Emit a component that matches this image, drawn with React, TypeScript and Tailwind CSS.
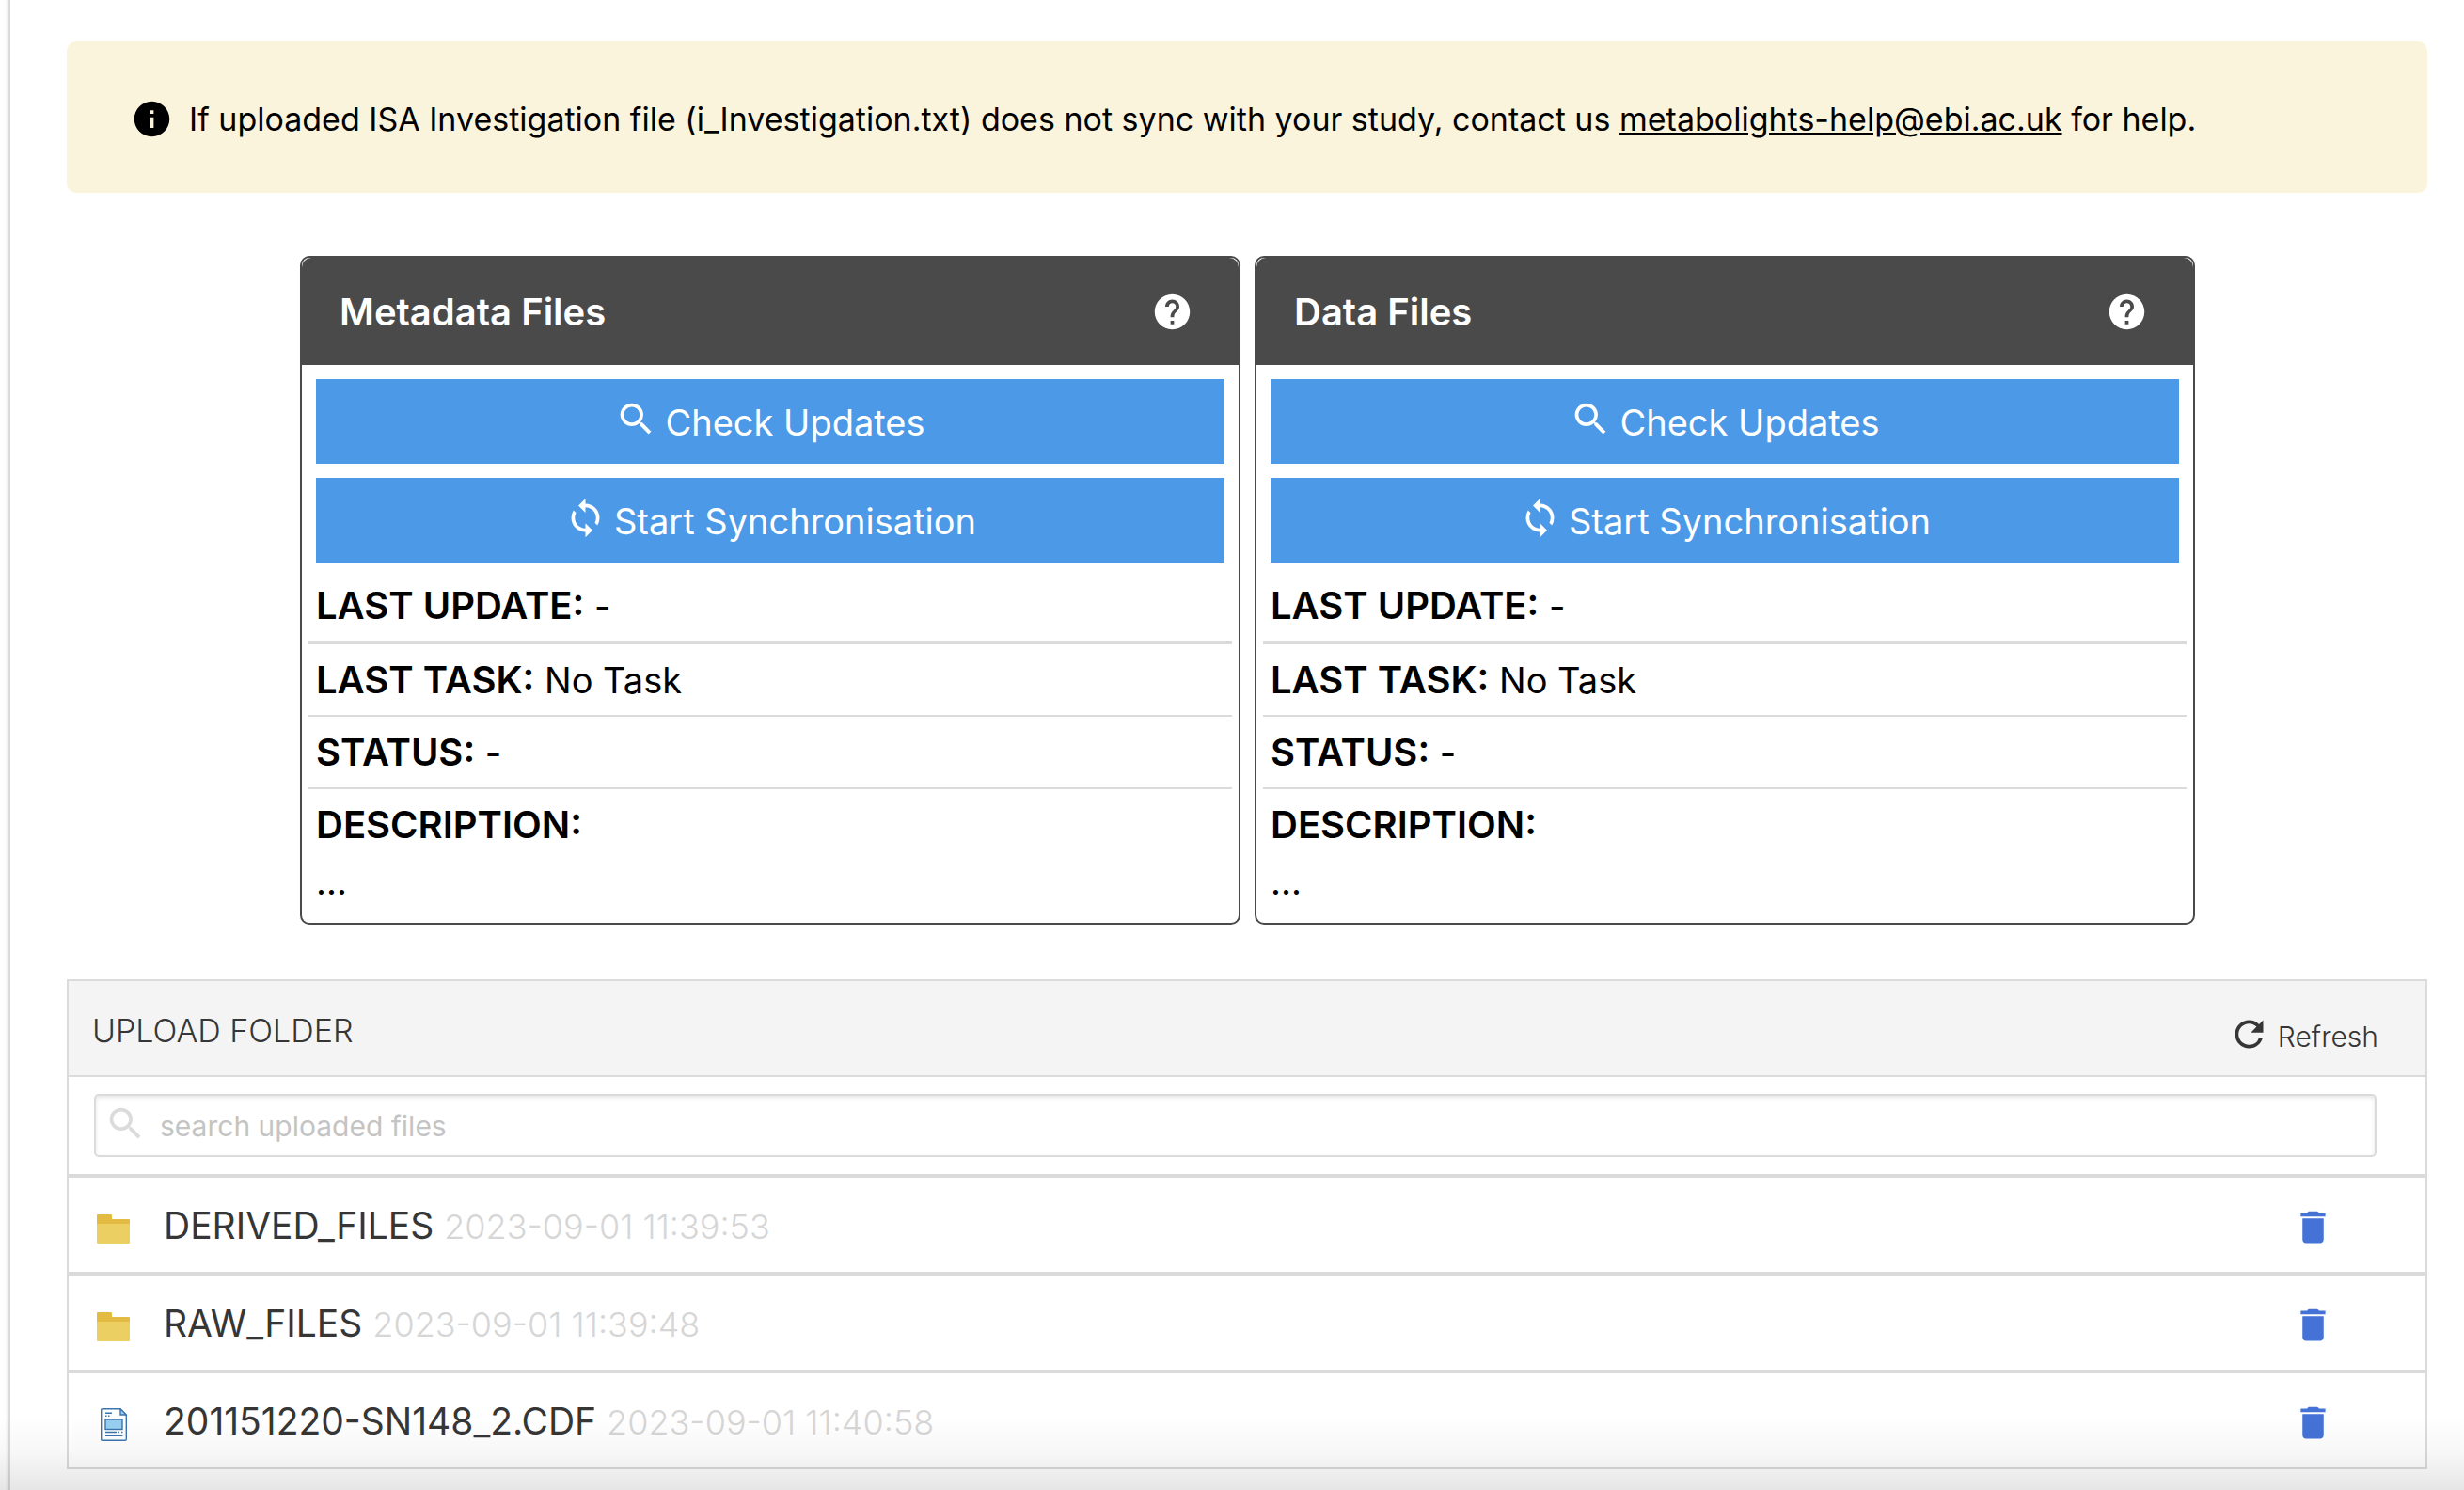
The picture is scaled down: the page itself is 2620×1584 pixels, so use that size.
import { MdDelete, MdHelp, MdInfo, MdRefresh, MdSearch, MdSync } from "react-icons/md";

function FolderIcon() {
  return (
    <svg className="h-[31px] w-[35px]" viewBox="0 0 35 31" aria-hidden="true">
      <path d="M1 0h14q1 0 1 1v4h18q1 0 1 1v10H0V1q0-1 1-1z" fill="#e3ba42" />
      <path d="M0 10h35v20q0 1-1 1H1q-1 0-1-1z" fill="#ebcf63" />
    </svg>
  );
}

function DocumentIcon() {
  return (
    <svg className="h-[35px] w-[28px]" viewBox="0 0 28 35" aria-hidden="true">
      <path d="M2 .7h18.5l6.8 6.8V33q0 1.3-1.3 1.3H2Q.7 34.3.7 33V2Q.7.7 2 .7z" fill="#fff" stroke="#3b74ae" strokeWidth="1.4" />
      <path d="M21 .7v6.3h6.3z" fill="#98cff0" stroke="#3b74ae" strokeWidth="1.4" />
      <path d="M5 5.2h7M5 8.2h1.5M8 8.2h1.5M5 25.5h12M19 25.5h1M22 25.5h1.5M5 29.3h18.5" stroke="#3b74ae" strokeWidth="1.5" />
      <rect x="5" y="12" width="18" height="10.5" fill="#98cff0" stroke="#3b74ae" strokeWidth="1.4" />
    </svg>
  );
}

function SyncCard({ title }: { title: string }) {
  return (
    <section className="flex-1 rounded-[10px] border-2 border-[#4a4a4a] bg-white">
      <header className="flex h-[114px] items-center justify-between rounded-t-[10px] bg-[#4a4a4a] pr-12 pl-10 text-white">
        <h2 className="pt-0.5 text-[40px] font-semibold">{title}</h2>
        <button aria-label={"Help: " + title}>
          <MdHelp size={45} />
        </button>
      </header>
      <div className="flex flex-col gap-[15px] px-[15px] pt-[15px]">
        <button className="flex h-[90px] items-center justify-center gap-2 bg-[#4b99e7] pt-0.5 text-[38px] text-white">
          <MdSearch className="mb-2" size={45} />
          Check Updates
        </button>
        <button className="flex h-[90px] items-center justify-center gap-2 bg-[#4b99e7] pt-0.5 text-[38px] text-white">
          <MdSync className="mb-2" size={45} />
          Start Synchronisation
        </button>
      </div>
      <div className="px-[7px] pb-[14px] text-[38px] leading-[60px] text-black">
        <p className="border-b-4 border-[#dbdbdb] px-2 pt-4 pb-[7px]">
          <b className="text-[40px] font-semibold">LAST UPDATE:</b> -
        </p>
        <p className="border-b-2 border-[#dbdbdb] px-2 pt-2 pb-[7px]">
          <b className="text-[40px] font-semibold">LAST TASK:</b> No Task
        </p>
        <p className="border-b-2 border-[#dbdbdb] px-2 pt-2 pb-[7px]">
          <b className="text-[40px] font-semibold">STATUS:</b> -
        </p>
        <div className="px-2 pt-2">
          <p>
            <b className="text-[40px] font-semibold">DESCRIPTION:</b>
          </p>
          <p>...</p>
        </div>
      </div>
    </section>
  );
}

const files = [
  { name: "DERIVED_FILES", date: "2023-09-01 11:39:53", folder: true },
  { name: "RAW_FILES", date: "2023-09-01 11:39:48", folder: true },
  { name: "201151220-SN148_2.CDF", date: "2023-09-01 11:40:58", folder: false },
];

export default function App() {
  return (
    <div className="relative flex min-h-screen bg-white font-[Inter,sans-serif]">
      <div className="w-[11px] shrink-0 border-r-2 border-[#dbdbdb] bg-linear-to-r from-white from-60% to-[#ececec]" />
      <main className="flex-1 pt-11 pr-[39px] pl-[60px]">
        <div className="flex h-[161px] items-center gap-[17px] rounded-[10px] bg-[#fbf4dc] px-[68px] pt-1 text-[34px] text-black">
          <MdInfo className="shrink-0" size={45} />
          <p>
            If uploaded ISA Investigation file (i_Investigation.txt) does not sync with your study, contact us{" "}
            <a className="underline" href="mailto:metabolights-help@ebi.ac.uk">
              metabolights-help@ebi.ac.uk
            </a>{" "}
            for help.
          </p>
        </div>

        <div className="mt-[67px] flex gap-[15px] pr-[247px] pl-[248px]">
          <SyncCard title="Metadata Files" />
          <SyncCard title="Data Files" />
        </div>

        <section className="mt-[58px] border-2 border-[#dbdbdb] text-[#363636]">
          <header className="flex h-[102px] items-center justify-between border-b-2 border-[#dbdbdb] bg-[#f4f4f4] pr-[50px] pl-[25px] font-light">
            <h2 className="pt-1 text-[34px]">UPLOAD FOLDER</h2>
            <button className="flex items-center gap-2 pt-[18px] text-[30px]">
              <MdRefresh className="mb-1.5" size={45} />
              Refresh
            </button>
          </header>
          <div className="flex items-center py-[18px] pr-[52px] pl-[27px]">
            <label className="flex h-[67px] flex-1 items-center gap-3.5 rounded-[5px] border-2 border-[#dbdbdb] pl-[9px] shadow-[inset_0_2px_4px_rgba(10,10,10,0.1)]">
              <MdSearch className="mb-1 text-[#dbdbdb]" size={45} />
              <input
                className="flex-1 bg-transparent pt-0.5 text-[30px] outline-none placeholder:text-[#c4c4c4]"
                type="text"
                aria-label="Search uploaded files"
                placeholder="search uploaded files"
              />
            </label>
          </div>
          <ul>
            {files.map((file) => (
              <li key={file.name} className="flex h-[104px] items-center border-t-4 border-[#dbdbdb] pr-[97px] pl-[30px]">
                <span className="flex w-[71px] shrink-0 pt-2">
                  {file.folder ? <FolderIcon /> : <span className="pl-1"><DocumentIcon /></span>}
                </span>
                <p className="flex-1 pt-[3px] text-[39px]">
                  {file.name} <span className="text-[36px] font-light text-[#d6d6d6]">{file.date}</span>
                </p>
                <button className="pt-1 text-[#4472d6]" aria-label={"Delete " + file.name}>
                  <MdDelete size={45} />
                </button>
              </li>
            ))}
          </ul>
        </section>
      </main>
      <div className="pointer-events-none absolute inset-x-0 bottom-0 h-20 bg-linear-to-b from-black/0 via-black/3 to-black/10" />
    </div>
  );
}
